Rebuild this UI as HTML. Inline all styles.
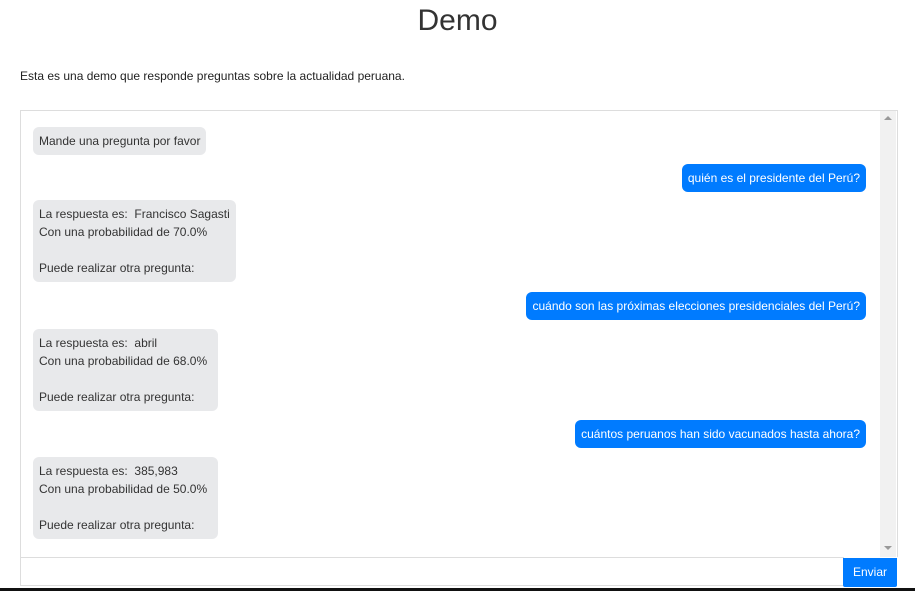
<!DOCTYPE html>
<html><head><style>
body{margin:0;width:915px;height:591px;background:#fff;font-family:"Liberation Sans",sans-serif;position:relative;overflow:hidden}
h1{position:absolute;top:4px;left:0;width:915px;margin:0;text-align:center;font-weight:normal;font-size:30px;color:#333}
.intro{position:absolute;top:69px;left:20px;font-size:12px;color:#222}
.box{position:absolute;left:20px;top:110px;width:876px;height:446px;border:1px solid #ddd;border-bottom:none}
.sb{position:absolute;left:880px;top:111px;width:16px;height:446px;background:#f1f1f1}
.b{position:absolute;font-size:12px;line-height:18px;border-radius:6px;padding:5px 6px}
.l{left:33px;background:#e8e9eb;color:#333}
.r{right:49px;background:#007bff;color:#fff}
.inp{position:absolute;left:20px;top:557px;width:822px;height:27px;border:1px solid #ddd}
.btn{position:absolute;left:843px;top:558px;width:54px;height:29px;background:#007bff;color:#fff;font-size:12px;line-height:29px;text-align:center;border-radius:0 0 2px 2px}
.bar{position:absolute;left:0;top:588px;width:915px;height:3px;background:#111}
</style></head><body>
<h1>Demo</h1>
<div class="intro">Esta es una demo que responde preguntas sobre la actualidad peruana.</div>
<div class="box"></div>
<div class="sb"><div style="position:absolute;left:4px;top:5px;border:4px solid transparent;border-bottom:4px solid #999;border-top:none"></div><div style="position:absolute;left:4px;top:435px;border:4px solid transparent;border-top:4px solid #999;border-bottom:none"></div></div>
<div class="b l" style="top:127px;padding-top:5px;padding-bottom:5px">Mande una pregunta por favor</div>
<div class="b r" style="top:164px">quién es el presidente del Perú?</div>
<div class="b l" style="top:200px">La respuesta es:&nbsp; Francisco Sagasti<br>Con una probabilidad de 70.0%<br><br>Puede realizar otra pregunta:</div>
<div class="b r" style="top:292px">cuándo son las próximas elecciones presidenciales del Perú?</div>
<div class="b l" style="top:329px;width:173px">La respuesta es:&nbsp; abril<br>Con una probabilidad de 68.0%<br><br>Puede realizar otra pregunta:</div>
<div class="b r" style="top:420px">cuántos peruanos han sido vacunados hasta ahora?</div>
<div class="b l" style="top:457px;width:173px">La respuesta es:&nbsp; 385,983<br>Con una probabilidad de 50.0%<br><br>Puede realizar otra pregunta:</div>
<div class="inp"></div>
<div class="btn">Enviar</div>
<div class="bar"></div>
</body></html>
